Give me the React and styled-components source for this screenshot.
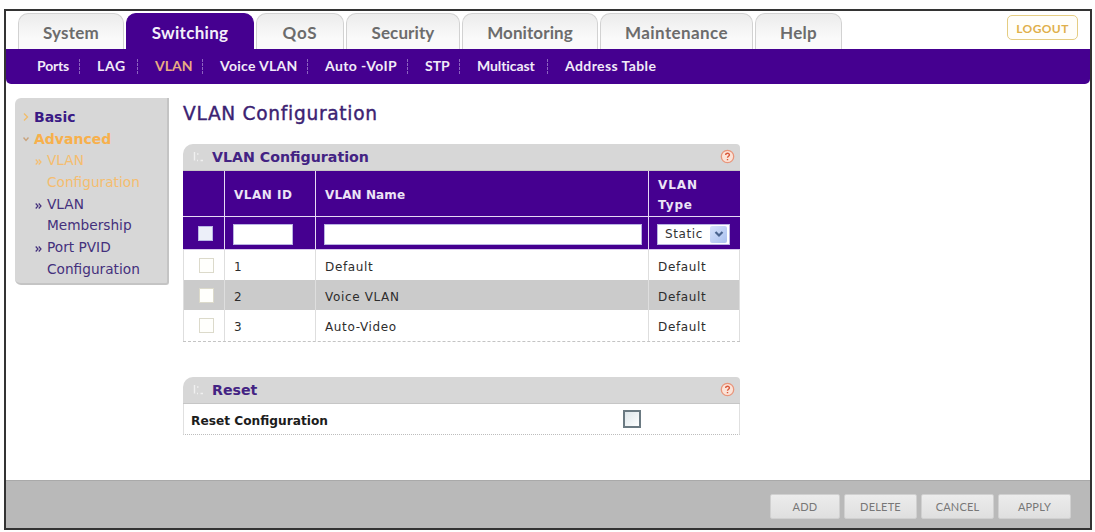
import React from 'react';
import styled, { createGlobalStyle } from 'styled-components';

function App() {
  return (
    <>
      <GlobalStyle />
      <Frame>
        <Header>
          <TabList>
            {TABS.map(({ id, title, width, spacing }) => {
              return (
                <Tab
                  key={id}
                  $width={width}
                  $spacing={spacing}
                  $active={title === 'Switching'}
                >
                  {title}
                </Tab>
              );
            })}
          </TabList>
          <LogoutBtn>LOGOUT</LogoutBtn>
        </Header>

        <SubNav>
          {SUB_MENUS.map(({ id, title, width, spacing }) => {
            return (
              <SubMenu
                key={id}
                $width={width}
                $spacing={spacing}
                $active={title === 'VLAN'}
              >
                {title}
              </SubMenu>
            );
          })}
        </SubNav>

        <Main>
          <SideMenu>
            <SideTitle>
              <SideArrow viewBox="0 0 6 8">
                <path d="M1 0.5 L4.5 4 L1 7.5" stroke="#f0bd6c" />
              </SideArrow>
              Basic
            </SideTitle>
            <SideTitle $active>
              <SideArrow viewBox="0 0 6 8">
                <path d="M0.5 2.5 L3 5.5 L5.5 2.5" stroke="#c9a37c" />
              </SideArrow>
              Advanced
            </SideTitle>
            {SIDE_MENUS.map(({ id, first, second, active }) => {
              return (
                <SideItem key={id} $active={active}>
                  <SideBullet viewBox="0 0 7 6">
                    <path d="M0.7 0.5 L3 3 L0.7 5.5 M3.7 0.5 L6 3 L3.7 5.5" />
                  </SideBullet>
                  <span>
                    {first}
                    <br />
                    {second}
                  </span>
                </SideItem>
              );
            })}
          </SideMenu>

          <Content>
            <PageTitle>VLAN Configuration</PageTitle>

            <Panel>
              <PanelHeader title="VLAN Configuration" />
              <HeadRow>
                <HeadCell />
                <HeadCell $spacing="0.5px">VLAN ID</HeadCell>
                <HeadCell>VLAN Name</HeadCell>
                <HeadCell $spacing="0.9px">
                  VLAN
                  <br />
                  Type
                </HeadCell>
              </HeadRow>
              <InputRow>
                <InputCell $center>
                  <RowCheck $color="#b9b6e6" $fill="#eceff9" />
                </InputCell>
                <InputCell>
                  <TextInput type="text" $width="60px" />
                </InputCell>
                <InputCell>
                  <TextInput type="text" $width="318px" />
                </InputCell>
                <InputCell>
                  <SelectBox>
                    Static
                    <SelectArrow>
                      <svg width="10" height="8" viewBox="0 0 10 8">
                        <path
                          d="M1.5 2 L5 5.5 L8.5 2"
                          fill="none"
                          stroke="#4a648f"
                          strokeWidth="2.2"
                        />
                      </svg>
                    </SelectArrow>
                  </SelectBox>
                </InputCell>
              </InputRow>
              {VLANS.map(({ id, name, type }) => {
                return (
                  <DataRow key={id} $gray={id % 2 === 0}>
                    <DataCell $center>
                      <RowCheck $color="#dcdacb" $fill="#fffffc" />
                    </DataCell>
                    <DataCell>{id}</DataCell>
                    <DataCell>{name}</DataCell>
                    <DataCell>{type}</DataCell>
                  </DataRow>
                );
              })}
            </Panel>

            <Panel>
              <PanelHeader title="Reset" />
              <ResetRow>
                <ResetLabel>Reset Configuration</ResetLabel>
                <ResetCheck />
              </ResetRow>
            </Panel>
          </Content>
        </Main>

        <Footer>
          {BUTTONS.map(({ id, title, width }) => {
            return (
              <FooterBtn key={id} $width={width}>
                {title}
              </FooterBtn>
            );
          })}
        </Footer>
      </Frame>
    </>
  );
}

function PanelHeader({ title }) {
  return (
    <PanelTop>
      <PanelIcon width="11" height="11" viewBox="0 0 11 11">
        <path d="M1.5 1 V9.5 M4 3 H5.5 M4 9.5 H5 M7.5 9.5 H10" />
      </PanelIcon>
      <PanelTitle>{title}</PanelTitle>
      <svg width="15" height="15" viewBox="0 0 15 15" fill="none">
        <circle cx="7.5" cy="7.5" r="6.2" fill="#fbe3d8" stroke="#e8957b" strokeWidth="1.3" />
        <path
          d="M5.7 5.9 C5.7 3.7 9.5 3.7 9.4 6 C9.3 7.4 7.6 7.2 7.5 8.8 M7.5 10 V11.2"
          stroke="#d9583a"
          strokeWidth="1.4"
        />
      </svg>
    </PanelTop>
  );
}

const GlobalStyle = createGlobalStyle`
  * {
    box-sizing: border-box;
  }

  body {
    margin: 0;
    background: #fefefe;
    font-family: 'DejaVu Sans', sans-serif;
  }
`;

const Frame = styled.div`
  display: flex;
  flex-direction: column;
  width: 1088px;
  height: 521px;
  margin: 9px 0 0 4px;
  border: 2px solid #333;
  background: #fff;
  overflow: hidden;
`;

const Header = styled.div`
  display: flex;
  justify-content: space-between;
  height: 38px;
  padding: 2px 12px 0;
`;

const TabList = styled.div`
  display: flex;
  gap: 2px;
`;

const Tab = styled.div`
  width: ${({ $width }) => $width}px;
  height: 36px;
  border: 1px solid ${({ $active }) => ($active ? '#450090' : '#d2d2d2')};
  border-bottom: none;
  border-radius: 10px 10px 0 0;
  background: ${({ $active }) =>
    $active ? '#450090' : 'linear-gradient(#ececec, #fafafa 70%)'};
  font-family: Lato, sans-serif;
  font-size: 17px;
  font-weight: 700;
  line-height: 38px;
  letter-spacing: ${({ $spacing }) => $spacing}px;
  text-align: center;
  color: ${({ $active }) => ($active ? '#f4effa' : '#6c6c6c')};
`;

const LogoutBtn = styled.button`
  width: 71px;
  height: 25px;
  margin: 2px 0 0;
  padding: 2px 0 0;
  border: 1px solid #e5cd82;
  border-radius: 5px;
  background: #fffefa;
  font-family: Lato, sans-serif;
  font-size: 12px;
  font-weight: 700;
  letter-spacing: 0.4px;
  color: #dfb04a;
`;

const SubNav = styled.div`
  display: flex;
  align-items: center;
  height: 35px;
  padding-left: 14px;
  border-radius: 0 0 5px 5px;
  background: #450090;
`;

const SubMenu = styled.div`
  width: ${({ $width }) => $width}px;
  height: 15px;
  padding-left: 17px;
  border-right: 1px dashed #8d63c0;
  font-family: Lato, sans-serif;
  font-size: 14px;
  font-weight: 700;
  line-height: 13px;
  letter-spacing: ${({ $spacing }) => $spacing}px;
  white-space: nowrap;
  color: ${({ $active }) => ($active ? '#e9ab83' : '#f1eaf8')};

  &:last-child {
    border-right: none;
  }
`;

const Main = styled.div`
  display: flex;
  flex: 1;
  align-items: flex-start;
  padding: 14px 0 0 9px;
`;

const SideMenu = styled.div`
  width: 154px;
  height: 187px;
  padding: 8px 0 0 8px;
  border-right: 2px solid #c4c4c4;
  border-bottom: 2px solid #c4c4c4;
  border-radius: 6px 0 3px 6px;
  background: #d7d7d7;
`;

const SideTitle = styled.div`
  display: flex;
  align-items: center;
  gap: 5px;
  font-size: 14px;
  font-weight: 700;
  line-height: 22px;
  color: ${({ $active }) => ($active ? '#f7b04c' : '#3a1a85')};
`;

const SideArrow = styled.svg`
  width: 6px;
  height: 8px;
  fill: none;
  stroke-width: 1.4;
`;

const SideItem = styled.div`
  display: flex;
  gap: 5px;
  padding-left: 12px;
  font-size: 13.7px;
  line-height: 21.8px;
  color: ${({ $active }) => ($active ? '#f5bd6e' : '#44307c')};
`;

const SideBullet = styled.svg`
  width: 7px;
  height: 6px;
  margin-top: 9px;
  fill: none;
  stroke: currentColor;
  stroke-width: 1.2;
`;

const Content = styled.div`
  width: 557px;
  margin-left: 14px;
`;

const PageTitle = styled.h1`
  height: 46px;
  margin: 0;
  padding-top: 5px;
  font-size: 18.6px;
  font-weight: 400;
  line-height: 22px;
  letter-spacing: 0.7px;
  color: #3b2272;
  -webkit-text-stroke: 0.4px #3b2272;
`;

const Panel = styled.div`
  margin-bottom: 35px;
`;

const PanelTop = styled.div`
  display: flex;
  align-items: center;
  height: 27px;
  padding: 0 5px 1px 10px;
  border-bottom: 1px solid #c6c6c6;
  border-radius: 10px 4px 0 0;
  background: #d7d7d7;
`;

const PanelIcon = styled.svg`
  fill: none;
  stroke: #f0f0f0;
  stroke-width: 1.4;
`;

const PanelTitle = styled.div`
  flex: 1;
  padding-left: 8px;
  font-size: 14.2px;
  font-weight: 700;
  color: #432383;
`;

const Row = styled.div`
  display: grid;
  grid-template-columns: 42px 91px 333px 91px;
`;

const HeadRow = styled(Row)`
  height: 46px;
  border-bottom: 1px solid #e6d9f4;
  background: #450090;
`;

const HeadCell = styled.div`
  display: flex;
  align-items: center;
  padding: 3px 0 0 9px;
  border-right: 1px solid #e6d9f4;
  font-size: 12px;
  font-weight: 700;
  line-height: 20px;
  letter-spacing: ${({ $spacing }) => $spacing || '0.1px'};
  color: #ece4f6;

  &:last-child {
    border-right: none;
  }
`;

const InputRow = styled(Row)`
  height: 33px;
  border-bottom: 1px solid #d8c8ec;
  background: #450090;
`;

const InputCell = styled.div`
  display: flex;
  align-items: center;
  justify-content: ${({ $center }) => ($center ? 'center' : 'flex-start')};
  padding: ${({ $center }) => ($center ? '1px 0 0 4px' : '2px 0 0 8px')};
  border-right: 1px solid #e6d9f4;

  &:last-child {
    border-right: none;
  }
`;

const TextInput = styled.input`
  width: ${({ $width }) => $width};
  height: 21px;
  padding: 0 3px;
  border: 1px solid #b9b3e2;
  background: #fff;
`;

const SelectBox = styled.div`
  display: flex;
  align-items: center;
  justify-content: space-between;
  width: 73px;
  height: 21px;
  padding: 0 2px 0 7px;
  border: 1px solid #b9b3e2;
  background: #fff;
  font-size: 12px;
  letter-spacing: 0.6px;
  color: #333;
`;

const SelectArrow = styled.div`
  display: flex;
  align-items: center;
  justify-content: center;
  width: 17px;
  height: 17px;
  border-radius: 2px;
  background: linear-gradient(135deg, #d6e2fb, #a9c0ef);
`;

const DataRow = styled(Row)`
  height: 30px;
  background: ${({ $gray }) => ($gray ? '#cbcbcb' : '#fff')};

  &:last-child {
    height: 32px;
    border-bottom: 1px dashed #c4c4c4;
  }
`;

const DataCell = styled.div`
  display: flex;
  align-items: center;
  justify-content: ${({ $center }) => ($center ? 'center' : 'flex-start')};
  padding: ${({ $center }) => ($center ? '0 0 0 4px' : '3px 0 0 9px')};
  border-right: 1px solid #dedede;
  font-size: 12px;
  letter-spacing: 0.65px;
  color: #2d2d2d;

  &:first-child {
    border-left: 1px solid #dedede;
  }
`;

const RowCheck = styled.div`
  width: 15px;
  height: 15px;
  border: 1px solid ${({ $color }) => $color};
  background: ${({ $fill }) => $fill};
`;

const ResetRow = styled.div`
  display: flex;
  align-items: center;
  height: 31px;
  padding-left: 7px;
  border: 1px solid #e0e0e0;
  border-top: none;
  border-bottom: 1px dotted #bdbdbd;
`;

const ResetLabel = styled.div`
  width: 432px;
  padding-top: 3px;
  font-size: 12.2px;
  font-weight: 700;
  color: #1c1c1c;
`;

const ResetCheck = styled.div`
  width: 18px;
  height: 18px;
  border: 2px solid #6b7a82;
  background: linear-gradient(135deg, #dde6ea, #fff);
`;

const Footer = styled.div`
  display: flex;
  align-items: center;
  justify-content: flex-end;
  gap: 4px;
  height: 48px;
  padding: 3px 19px 0 0;
  border-top: 1px solid #a9a9a9;
  background: #b9b9b9;
`;

const FooterBtn = styled.button`
  width: ${({ $width }) => $width}px;
  height: 25px;
  padding: 0;
  border: 1px solid #d0d0d0;
  border-radius: 2px;
  background: linear-gradient(#ececec, #dfdfdf);
  font-family: Lato, sans-serif;
  font-size: 11px;
  letter-spacing: 0.2px;
  color: #777;
`;

export default App;

const TABS = [
  { id: 1, title: 'System', width: 106, spacing: 0.2 },
  { id: 2, title: 'Switching', width: 128, spacing: 0.3 },
  { id: 3, title: 'QoS', width: 88, spacing: 0.9 },
  { id: 4, title: 'Security', width: 114, spacing: 0.1 },
  { id: 5, title: 'Monitoring', width: 136, spacing: 0.1 },
  { id: 6, title: 'Maintenance', width: 153, spacing: 0.4 },
  { id: 7, title: 'Help', width: 87, spacing: 0.3 },
];

const SUB_MENUS = [
  { id: 1, title: 'Ports', width: 60, spacing: -0.2 },
  { id: 2, title: 'LAG', width: 58, spacing: 0.7 },
  { id: 3, title: 'VLAN', width: 65, spacing: 0 },
  { id: 4, title: 'Voice VLAN', width: 105, spacing: 0.3 },
  { id: 5, title: 'Auto -VoIP', width: 100, spacing: 0.4 },
  { id: 6, title: 'STP', width: 52, spacing: 0 },
  { id: 7, title: 'Multicast', width: 88, spacing: -0.1 },
  { id: 8, title: 'Address Table', width: 120, spacing: 0.4 },
];

const SIDE_MENUS = [
  { id: 1, first: 'VLAN', second: 'Configuration', active: true },
  { id: 2, first: 'VLAN', second: 'Membership', active: false },
  { id: 3, first: 'Port PVID', second: 'Configuration', active: false },
];

const VLANS = [
  { id: 1, name: 'Default', type: 'Default' },
  { id: 2, name: 'Voice VLAN', type: 'Default' },
  { id: 3, name: 'Auto-Video', type: 'Default' },
];

const BUTTONS = [
  { id: 1, title: 'ADD', width: 70 },
  { id: 2, title: 'DELETE', width: 73 },
  { id: 3, title: 'CANCEL', width: 73 },
  { id: 4, title: 'APPLY', width: 73 },
];
